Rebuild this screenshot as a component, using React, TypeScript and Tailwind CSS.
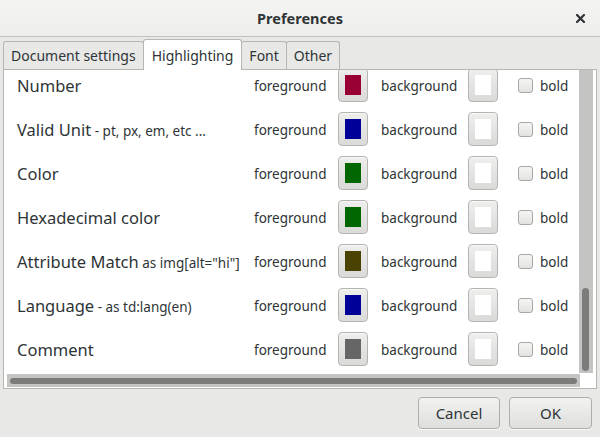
import React from "react";

type Row = { main: string; sub?: string; color: string };

const rows: Row[] = [
  { main: "Number", color: "#990033" },
  { main: "Valid Unit", sub: " - pt, px, em, etc ...", color: "#000099" },
  { main: "Color", color: "#006600" },
  { main: "Hexadecimal color", color: "#006600" },
  { main: "Attribute Match", sub: ' as img[alt="hi"]', color: "#4a4200" },
  { main: "Language", sub: " - as td:lang(en)", color: "#000099" },
  { main: "Comment", color: "#666666" },
];

function ColorButton({ color }: { color: string }) {
  return (
    <div className="w-[30px] h-[34px] rounded-[4px] border border-[#b4b4b1] bg-gradient-to-b from-[#eeeeed] to-[#dadad8] flex items-center justify-center shadow-[inset_0_1px_0_#f8f8f8]">
      <div className="w-[16px] h-[20px]" style={{ backgroundColor: color }} />
    </div>
  );
}

function Checkbox() {
  return (
    <div className="w-[15px] h-[15px] rounded-[3px] border border-[#a6a6a3] bg-gradient-to-b from-[#f6f6f5] to-[#e2e2e0]" />
  );
}

function Tab({ label, active }: { label: string; active?: boolean }) {
  if (active) {
    return (
      <div className="relative z-10 -mb-px h-[31px] px-[8px] flex items-center bg-white border border-b-0 border-[#b6b6b3] rounded-t-[3px] text-[14px] -ml-px">
        {label}
      </div>
    );
  }
  return (
    <div className="h-[28px] px-[7px] flex items-center bg-[#e8e8e7] border border-b-0 border-[#b6b6b3] rounded-t-[3px] text-[14px] -ml-px first:ml-0">
      {label}
    </div>
  );
}

export default function App() {
  return (
    <div className="w-[600px] h-[437px] bg-[#e8e8e7] flex flex-col font-['Noto_Sans',sans-serif] text-[#2e3436] overflow-hidden">
      {/* Title bar */}
      <div className="relative h-[37px] shrink-0 flex items-center justify-center bg-gradient-to-b from-[#f4f4f3] to-[#ededec] border-b border-[#c2c2bf]">
        <span className="text-[14.5px] font-bold leading-none">Preferences</span>
        <svg className="absolute right-[15px] top-[14px]" width="9" height="9" viewBox="0 0 9 9">
          <path d="M1 1 L8 8 M8 1 L1 8" stroke="#2e3436" strokeWidth="2.2" strokeLinecap="square" />
        </svg>
      </div>

      {/* Notebook */}
      <div className="mx-[3px] mt-[2px] flex flex-col">
        <div className="flex items-end h-[30px]">
          <Tab label="Document settings" />
          <Tab label="Highlighting" active />
          <Tab label="Font" />
          <Tab label="Other" />
        </div>
        <div className="h-[320px] border border-[#b6b6b3] bg-white flex flex-col pr-[3px] pb-[1px]">
          <div className="flex h-[304px]">
            <div className="w-[576px] h-[304px] overflow-hidden">
              <div className="-mt-[7px] pl-[13px]">
                {rows.map((r, i) => (
                  <div key={i} className="h-[44px] flex items-center">
                    <div className="w-[237px] whitespace-nowrap pt-[2px]">
                      <span className="text-[16.5px]">{r.main}</span>
                      {r.sub && <span className="text-[13.5px]">{r.sub}</span>}
                    </div>
                    <div className="w-[84px] text-[13.5px] pt-[3px]">foreground</div>
                    <ColorButton color={r.color} />
                    <div className="w-[13px]" />
                    <div className="w-[87px] text-[13.5px] pt-[3px]">background</div>
                    <ColorButton color="#ffffff" />
                    <div className="w-[20px]" />
                    <Checkbox />
                    <div className="w-[7px]" />
                    <div className="text-[13.5px] pt-[3px]">bold</div>
                  </div>
                ))}
              </div>
            </div>
            {/* vertical scrollbar */}
            <div className="w-[14px] h-[303px] bg-[#c4c4c2] pl-[3px] pt-[218px]">
              <div className="w-[7px] h-[83px] rounded-full bg-[#7c7c7b]" />
            </div>
          </div>
          {/* horizontal scrollbar */}
          <div className="h-[13px] pl-[3px]">
            <div className="w-[573px] h-[13px] bg-[#c4c4c2] pl-[3px] pt-[4px]">
              <div className="w-[567px] h-[6px] rounded-full bg-[#7c7c7b]" />
            </div>
          </div>
        </div>
      </div>

      {/* Buttons */}
      <div className="flex justify-end gap-[9px] pr-[8px] pt-[8px]">
        <button className="w-[82px] h-[32px] rounded-[4px] border border-[#aeaeab] bg-gradient-to-b from-[#f2f2f1] to-[#dededc] text-[15px] text-[#2e3436] shadow-[0_1px_0_#f8f8f8]">
          Cancel
        </button>
        <button className="w-[83px] h-[32px] rounded-[4px] border border-[#aeaeab] bg-gradient-to-b from-[#f2f2f1] to-[#dededc] text-[15px] text-[#2e3436] shadow-[0_1px_0_#f8f8f8]">
          OK
        </button>
      </div>
    </div>
  );
}
